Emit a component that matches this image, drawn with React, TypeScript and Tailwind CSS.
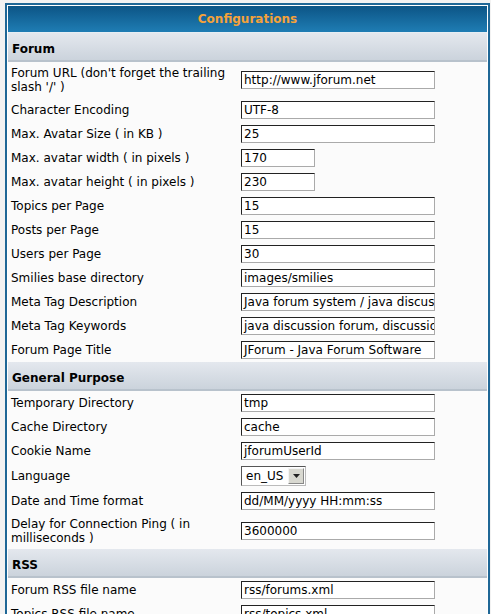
import React from "react";

type Row = {
  label: string;
  value?: string;
  short?: boolean;
  select?: boolean;
};

const sections: { title: string; rows: Row[] }[] = [
  {
    title: "Forum",
    rows: [
      { label: "Forum URL (don't forget the trailing slash '/' )", value: "http://www.jforum.net" },
      { label: "Character Encoding", value: "UTF-8" },
      { label: "Max. Avatar Size ( in KB )", value: "25" },
      { label: "Max. avatar width ( in pixels )", value: "170", short: true },
      { label: "Max. avatar height ( in pixels )", value: "230", short: true },
      { label: "Topics per Page", value: "15" },
      { label: "Posts per Page", value: "15" },
      { label: "Users per Page", value: "30" },
      { label: "Smilies base directory", value: "images/smilies" },
      { label: "Meta Tag Description", value: "Java forum system / java discuss" },
      { label: "Meta Tag Keywords", value: "java discussion forum, discussion" },
      { label: "Forum Page Title", value: "JForum - Java Forum Software" },
    ],
  },
  {
    title: "General Purpose",
    rows: [
      { label: "Temporary Directory", value: "tmp" },
      { label: "Cache Directory", value: "cache" },
      { label: "Cookie Name", value: "jforumUserId" },
      { label: "Language", value: "en_US", select: true },
      { label: "Date and Time format", value: "dd/MM/yyyy HH:mm:ss" },
      { label: "Delay for Connection Ping ( in milliseconds )", value: "3600000" },
    ],
  },
  {
    title: "RSS",
    rows: [
      { label: "Forum RSS file name", value: "rss/forums.xml" },
      { label: "Topics RSS file name", value: "rss/topics.xml" },
    ],
  },
];

const Field = ({ row }: { row: Row }) => {
  if (row.select) {
    return (
      <div className="flex items-center h-[20px] my-[3px] w-[65px] border border-t-[#555] border-l-[#555] border-r-[#bbb] border-b-[#bbb] bg-white">
        <span className="flex-1 pl-[4px] text-[12px] leading-[14px]">{row.value}</span>
        <div className="flex items-center justify-center w-[16px] h-[16px] mr-[1px] bg-[#d8d8d0] border border-[#f4f4f4] border-r-[#888] border-b-[#888]">
          <svg width="7" height="4" viewBox="0 0 7 4">
            <path d="M0 0h7L3.5 4z" fill="#222" />
          </svg>
        </div>
      </div>
    );
  }
  return (
    <div
      className={`${row.short ? "w-[74px]" : "w-[194px]"} h-[18px] overflow-hidden whitespace-nowrap bg-white border border-t-[#222] border-l-[#222] border-r-[#aaa] border-b-[#aaa] pl-[2px] text-[12px] leading-[16px]`}
    >
      {row.value}
    </div>
  );
};

export default function App() {
  return (
    <div
      className="h-[614px] overflow-hidden bg-[#f2f2f2] pt-[3px] pl-[5px] text-black"
      style={{ fontFamily: "'DejaVu Sans', Verdana, sans-serif" }}
    >
      <div className="w-[485px] border-2 border-[#1f6796] bg-white p-[1px]">
        <div className="h-[26px] flex items-center justify-center bg-gradient-to-b from-[#0c5586] to-[#1f7db4] text-[#f5a23a] text-[12px] font-bold">
          Configurations
        </div>
        <div className="h-[1px] bg-[#e6eef4]" />
        {sections.map((s) => (
          <div key={s.title}>
            <div className="h-[29px] flex items-center pt-[5px] pl-[4px] bg-gradient-to-b from-[#e4e8ee] to-[#cbd3dc] border-b-2 border-[#b8c2cc] text-[12px] font-bold">
              {s.title}
            </div>
            {s.rows.map((r) => (
              <div key={r.label} className="flex items-center min-h-[24px] bg-[#fbfbfb]">
                <div className="w-[233px] py-[4px] pl-[3px] pr-[4px] text-[12px] leading-[14px]">{r.label}</div>
                <Field row={r} />
              </div>
            ))}
          </div>
        ))}
      </div>
    </div>
  );
}
